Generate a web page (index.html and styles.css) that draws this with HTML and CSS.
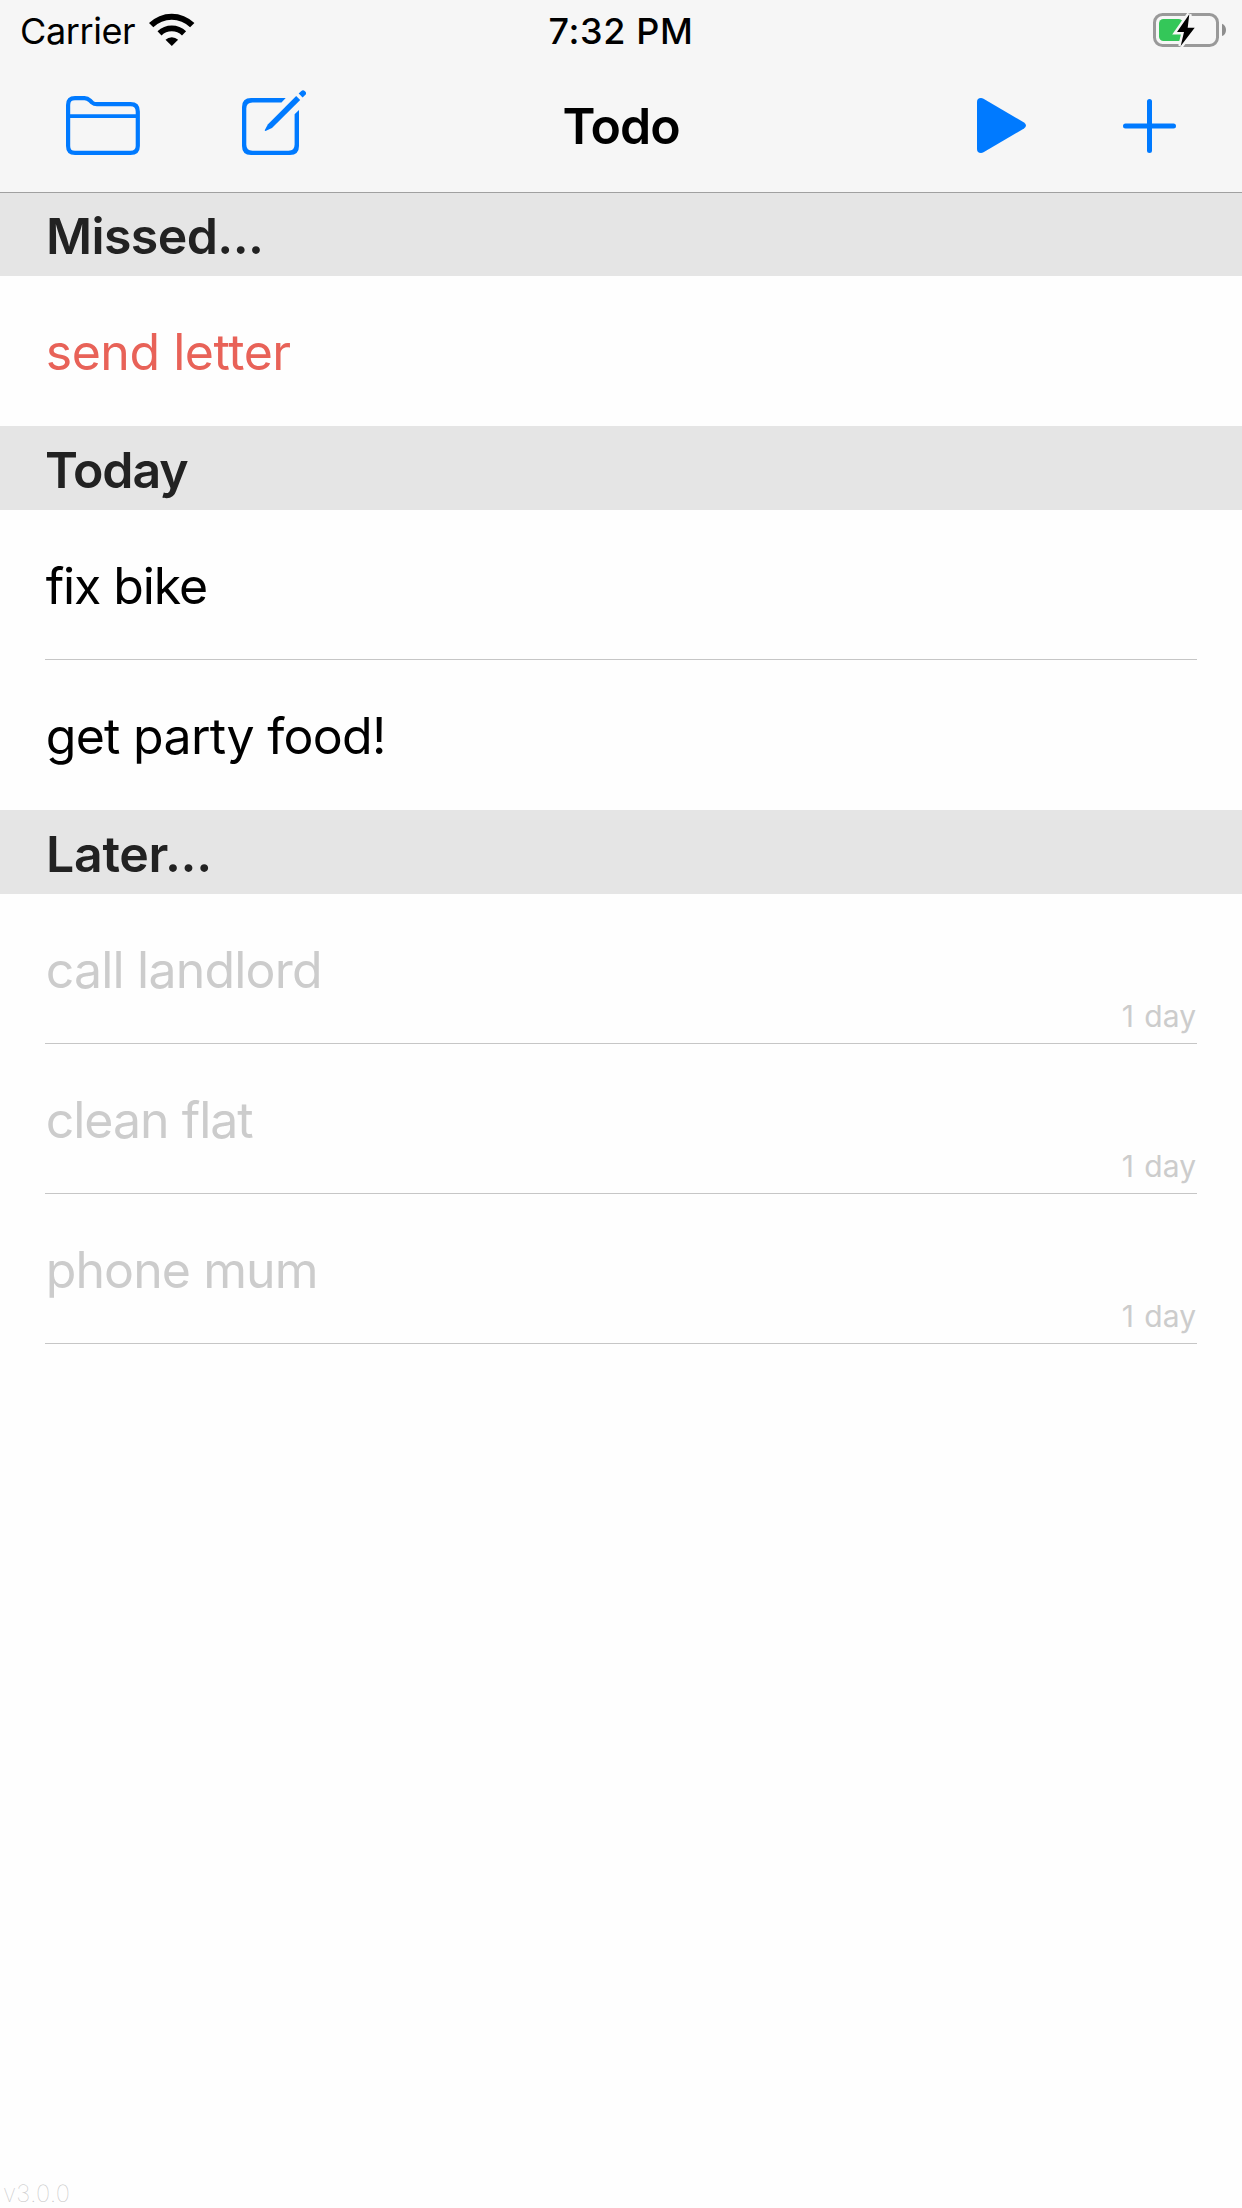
FILE: index.html
```html
<!DOCTYPE html>
<html lang="en">
<head>
<meta charset="utf-8">
<title>Todo</title>
<link rel="stylesheet" href="styles.css">
</head>
<body>
<div class="screen">
  <header class="top">
    <div class="status">
      <div class="status-left">
        <span class="carrier">Carrier</span>
        <svg width="46" height="34" viewBox="0 0 46 34">
          <path d="M0 10A32.600 32.600 0 0 1 45.400 10L41.100 14.300A26.500 26.500 0 0 0 4.300 14.300Z"/>
          <path d="M8.500 18.200A21 21 0 0 1 37.100 18.200L33 22.400A15 15 0 0 0 12.500 22.400Z"/>
          <path d="M16.500 26.700A9 9 0 0 1 29.100 26.700L22.800 33Z"/>
        </svg>
      </div>
      <span class="clock">7:32 PM</span>
      <svg class="battery" width="73" height="34" viewBox="0 0 73 34">
        <rect x="1.500" y="1.500" width="63" height="31" rx="8" fill="none" stroke="#999" stroke-width="3"/>
        <path d="M69 10.700Q73 12.500 73 16.900T69 23.100Z" fill="#8e8e8e"/>
        <rect x="6" y="6" width="24" height="22" rx="4.500" fill="#34c759"/>
        <path d="M36.300 1.300L24 19H31L27.700 33L41.700 14.700H34.700Z" fill="#f6f6f6" stroke="#f6f6f6" stroke-width="5"/>
        <path d="M36.300 1.300L24 19H31L27.700 33L41.700 14.700H34.700Z"/>
      </svg>
    </div>
    <nav class="bar">
      <div class="actions actions-left">
        <svg width="74" height="60" viewBox="0 0 74 60" fill="none" stroke="#007aff" stroke-width="4.200">
          <path d="M2.100 9Q2.100 2.100 9 2.100H18.500Q21.500 2.100 24 4.500L26 6.500Q28 8.200 31 8.200H64.500Q71.800 8.200 71.800 15.500V50Q71.800 56.900 64.500 56.900H9Q2.100 56.900 2.100 50Z"/>
          <path d="M2.100 20.200H71.800" stroke-width="3.800"/>
        </svg>
        <svg class="compose" width="64" height="66" viewBox="0 0 64 66" fill="#007aff">
          <path d="M43.700 9H9Q0 9 0 18V57Q0 66 9 66H48Q57 66 57 57V21L52.600 25.200V55.500Q52.600 61.700 46.500 61.700H10.500Q4.300 61.700 4.300 55.500V19.500Q4.300 13.400 10.500 13.400H39.500Z"/>
          <path d="M54.200 7L58.200 10.900L30 38.900L23.500 42Q22.500 42 22.800 41L26 35.200Z"/>
          <path d="M56.700 4.600L59.300 2Q61 .3 63 2.200T63.200 6L60.600 8.500Z"/>
        </svg>
      </div>
      <h1 class="title">Todo</h1>
      <div class="actions actions-right">
        <svg width="49" height="56" viewBox="0 0 49 56">
          <path d="M0 4Q0 0 4 0Q5.300 0 6.500 .7L47 24.500Q49 25.800 49 27.500T47 30.500L6.500 54.300Q5.300 55 4 55Q0 55 0 51Z" fill="#007aff"/>
        </svg>
        <svg width="53" height="54" viewBox="0 0 53 54">
          <path d="M26.500 2.500V51.500M2.500 27H50.500" stroke="#007aff" stroke-width="5" stroke-linecap="round"/>
        </svg>
      </div>
    </nav>
  </header>

  <main class="list">
    <h2 class="section missed-head">Missed...</h2>
    <ul class="items">
      <li class="item missed"><span class="text send">send letter</span></li>
    </ul>
    <h2 class="section today">Today</h2>
    <ul class="items">
      <li class="item"><span class="text bike">fix bike</span></li>
      <li class="item"><span class="text party">get party food!</span></li>
    </ul>
    <h2 class="section later-head">Later...</h2>
    <ul class="items later">
      <li class="item"><span class="text call">call landlord</span><span class="due">1 day</span></li>
      <li class="item"><span class="text clean">clean flat</span><span class="due">1 day</span></li>
      <li class="item"><span class="text phone">phone mum</span><span class="due">1 day</span></li>
    </ul>
  </main>

  <footer class="version">v3.0.0</footer>
</div>
</body>
</html>
```
FILE: styles.css
```css
* {
  box-sizing: border-box;
}

body {
  margin: 0;
  background: #fefefe;
  color: #000;
  font-family: Inter, "Liberation Sans", sans-serif;
}

svg {
  display: block;
}

.screen {
  display: flex;
  flex-direction: column;
  height: 2208px;
}

/* Status bar and navigation bar */
.top {
  height: 193px;
  background: #f6f6f6;
  border-bottom: 1px solid #a0a0a0;
}

.status,
.bar {
  display: grid;
  grid-template-columns: 1fr auto 1fr;
  align-items: center;
}

.status {
  height: 60px;
  padding: 0 16px 0 20px;
  font-size: 36px;
  line-height: 58px;
}

.status-left {
  display: flex;
  align-items: center;
  gap: 14px;
}

.carrier,
.clock {
  padding-top: 2px;
}

.carrier {
  letter-spacing: -0.4px;
}

.clock {
  padding-right: 4px;
  font-weight: 500;
  letter-spacing: 0.6px;
}

.battery {
  justify-self: end;
}

.bar {
  height: 132px;
  padding: 0 66px;
}

.actions {
  display: flex;
  align-items: center;
}

.actions-left {
  gap: 102px;
}

.actions-right {
  justify-content: flex-end;
  gap: 97px;
}

.compose {
  margin-bottom: 8px;
}

.title {
  margin: 0;
  font-size: 50px;
  font-weight: 600;
  line-height: 60px;
  letter-spacing: -1px;
}

/* Task list */
.list {
  flex: 1;
}

.section {
  height: 84px;
  margin: 0;
  padding: 3px 46px 0;
  background: #e5e5e5;
  color: #222;
  font-size: 50px;
  font-weight: 600;
  line-height: 82px;
  letter-spacing: -0.6px;
}

.missed-head {
  height: 83px;
  padding-top: 2px;
}

.today {
  padding-left: 45px;
  letter-spacing: -1.1px;
}

.later-head {
  letter-spacing: -0.3px;
}

.items {
  margin: 0;
  padding: 0 45px;
  list-style: none;
}

.item {
  display: flex;
  justify-content: space-between;
  height: 150px;
  padding-top: 2px;
  border-bottom: 1px solid #c6c6c6;
  font-size: 50px;
  line-height: 149px;
}

.items:not(.later) .item:last-child {
  border-bottom-color: transparent;
}

.text {
  height: 147px;
  padding-left: 0.7px;
}

.missed {
  color: #e86258;
}

.later {
  color: #ccc;
}

.send {
  letter-spacing: -0.45px;
}

.bike {
  letter-spacing: -1.1px;
}

.party {
  letter-spacing: -0.7px;
}

.call {
  letter-spacing: -0.8px;
}

.clean {
  letter-spacing: -1px;
}

.phone {
  letter-spacing: -0.9px;
}

.due {
  align-self: flex-end;
  padding: 0 1px 9px 0;
  font-size: 30px;
  line-height: 36px;
  word-spacing: 2px;
}

.version {
  height: 30px;
  padding: 1px 0 0 3px;
  color: #c4c4c4;
  font-size: 24px;
  font-weight: 100;
  line-height: 30px;
  letter-spacing: 0.2px;
}
```
